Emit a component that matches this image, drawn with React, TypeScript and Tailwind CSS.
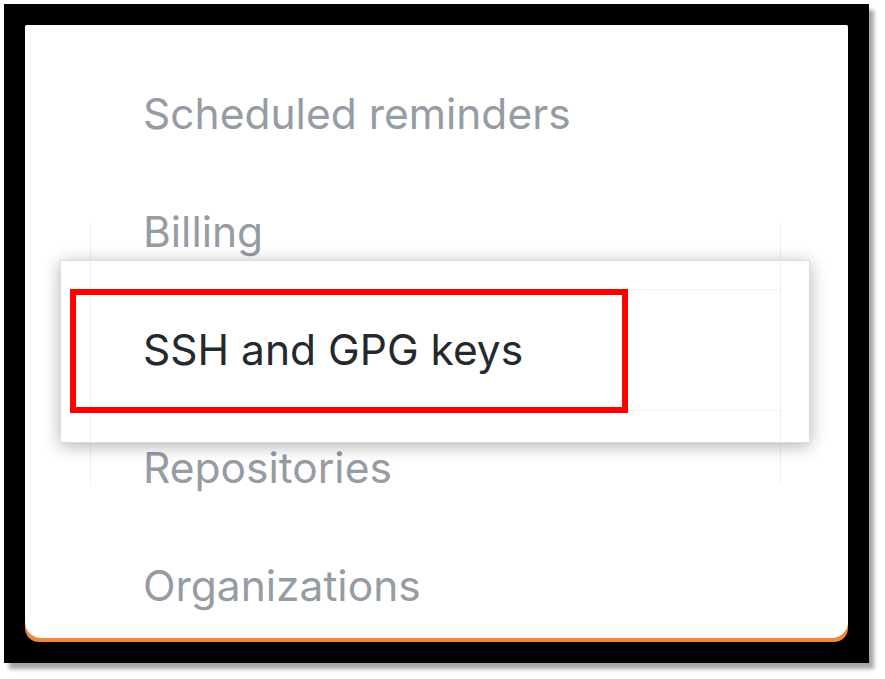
import React from 'react';

const items = ['Scheduled reminders', 'Billing', 'SSH and GPG keys', 'Repositories', 'Organizations'];

const App: React.FC = () => {
    return (
        <div className="w-[885px] h-[679px] bg-white p-[4px] font-['Inter','Liberation_Sans',Arial,sans-serif]">
            <div className="relative w-[865px] h-[659px] bg-black p-[21px] shadow-[5px_6px_4px_rgba(0,0,0,0.35)]">
                <div className="h-full bg-[#f0873a] rounded-t-[2px] rounded-b-[14px]">
                    <div className="h-[613px] bg-white rounded-t-[2px] rounded-b-[16px] pt-[30px] pl-[118px] flex flex-col">
                        {items.map((label, i) => (
                            <div
                                key={label}
                                className={`h-[118px] leading-[118px] text-[42.5px] ${i === 2 ? 'invisible' : 'text-[#969ca3]'}`}
                            >
                                {label}
                            </div>
                        ))}
                    </div>
                </div>

                {/* faint guide lines around the zoomed row */}
                <div className="absolute left-[86px] top-[218px] w-px h-[262px] bg-[#eef1f6]" />
                <div className="absolute left-[776px] top-[218px] w-px h-[262px] bg-[#eef1f6]" />

                {/* magnified row */}
                <div className="absolute left-[56px] top-[256px] w-[750px] h-[183px] bg-white border border-[#dcdcdc] shadow-[0_3px_16px_rgba(0,0,0,0.3)] pt-[28px] pl-[9px]">
                    <div className="absolute left-[29px] top-[-1px] w-[691px] h-[183px] border-x border-[#eef1f6] pt-[29px]">
                        <div className="h-[122px] border-y border-[#f0f3f8]" />
                    </div>
                    <div className="relative w-[558px] h-[124px] border-[6px] border-[#ff0000] flex items-center pl-[67px] pb-[2px]">
                        <span className="text-[42.5px] text-[#24292e]">SSH and GPG keys</span>
                    </div>
                </div>
            </div>
        </div>
    );
};

export default App;
